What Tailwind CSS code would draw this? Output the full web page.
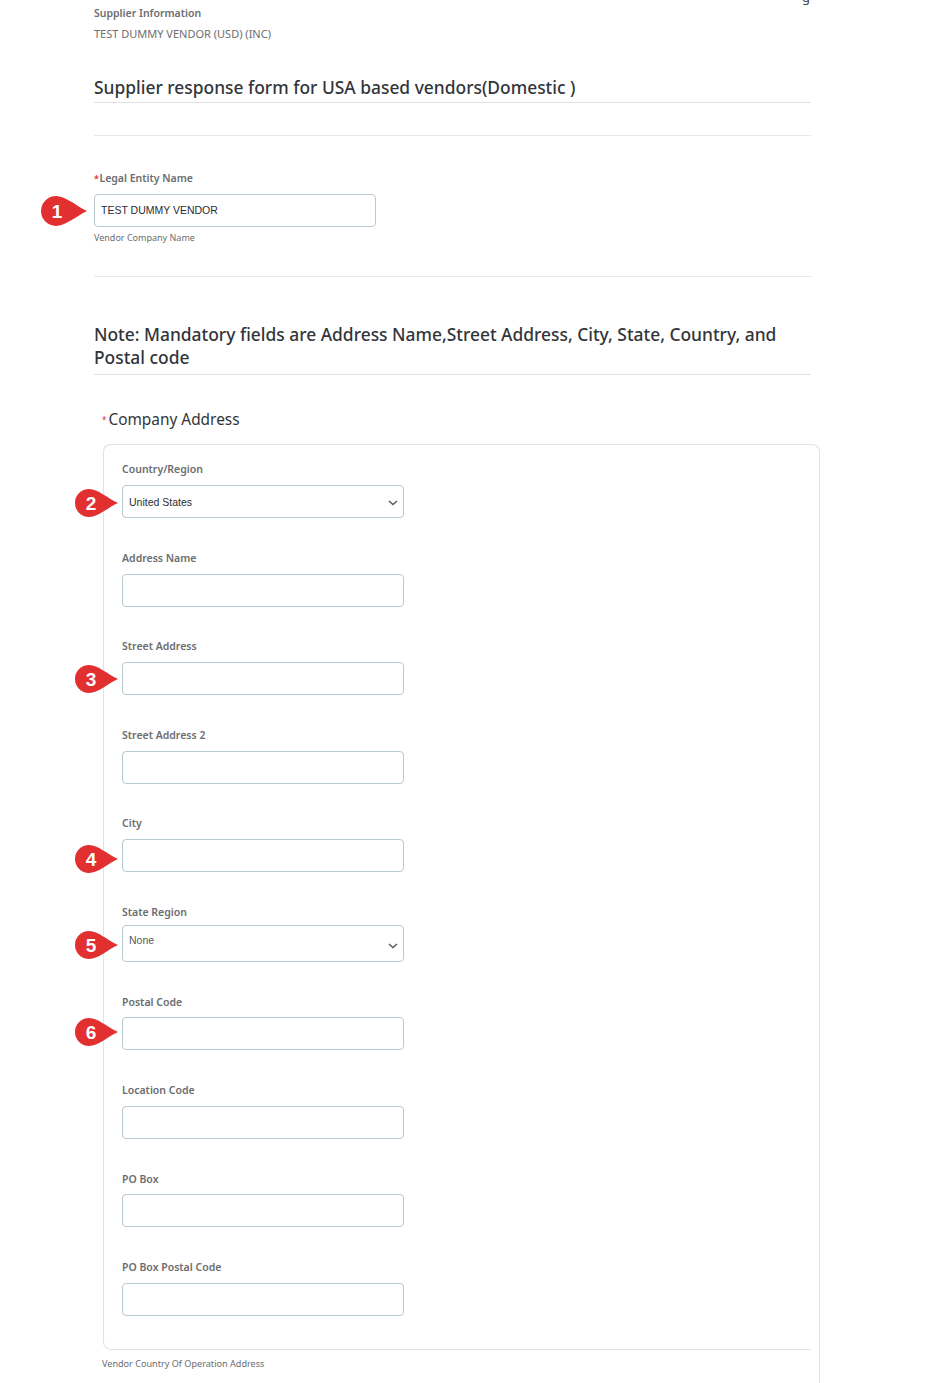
<!DOCTYPE html>
<html lang="en">
<head>
  <meta charset="UTF-8" />
  <title>Supplier response form</title>
  <script src="https://cdn.jsdelivr.net/npm/@tailwindcss/browser@4"></script>
</head>
<body class="bg-white h-[1383px] overflow-hidden relative font-['Noto_Sans',sans-serif]">

  <!-- cut off text at the very top -->
  <span class="absolute left-[802px] top-[-11px] text-[13px] leading-[16px] text-[#444]">g</span>

  <div class="ml-[94px] w-[717px]">
    <!-- supplier info -->
    <div class="h-[21px] pt-[5px] text-[10.5px] leading-[16px] font-semibold text-[#6b6d70]">Supplier Information</div>
    <div class="mt-[5px] text-[11px] leading-[16px] text-[#6b6d70]">TEST DUMMY VENDOR (USD) (INC)</div>

    <h2 class="mt-[31px] h-[30px] border-b border-[#dfe1e3] text-[17.4px] leading-[28px] font-medium text-[#32353a]">Supplier response form for USA based vendors(Domestic )</h2>
    <div class="mt-[32px] border-t border-[#e6e8ea]"></div>

    <!-- legal entity -->
    <label class="mt-[35px] flex items-center h-[16px] text-[10.5px] font-semibold text-[#6b6d70]"><span class="mr-[0.5px] text-[9px] text-[#e02d2d]">*</span>Legal Entity Name</label>
    <div class="relative mt-[7px] w-[282px]">
      <svg class="absolute left-[-53px] top-[2px]" width="46" height="30" viewBox="0 0 46 30"><path d="M15 0C24 0 34 9 46 15C34 21 24 30 15 30A15 15 0 0 1 15 0Z" fill="#e22f2f"/><text x="16" y="22" text-anchor="middle" fill="#fff" font-size="19" font-weight="700" font-family="Liberation Sans">1</text></svg>
      <div class="flex items-center h-[33px] px-[6px] border border-[#b9c9d2] rounded-[4px] font-['Liberation_Sans'] text-[10.5px] text-[#2b2d30]">TEST DUMMY VENDOR</div>
    </div>
    <div class="mt-[3px] h-[16px] text-[9px] leading-[16px] text-[#6b6d70]">Vendor Company Name</div>
    <div class="mt-[30px] border-t border-[#e6e8ea]"></div>

    <h2 class="mt-[46px] pb-[5px] border-b border-[#dfe1e3] text-[17.4px] leading-[23px] font-medium text-[#32353a]">Note: Mandatory fields are Address Name,Street Address, City, State, Country, and Postal code</h2>

    <div class="mt-[34px] ml-[8px] flex items-center h-[21px] text-[15.4px] text-[#32353a]"><span class="mr-[2px] text-[#e02d2d] text-[8px]">*</span>Company Address</div>
  </div>

  <!-- address card, right edge runs on past the end of the screenshot -->
  <div class="ml-[103px] mt-[14px] w-[717px] h-[940px] border-t border-r border-[#e0e2e4] rounded-t-[8px]">
    <div class="-mt-px w-[708px] h-[906px] border-t border-l border-b border-[#e0e2e4] rounded-l-[8px] bg-white pt-[16px] pl-[18px]">

      <label class="block h-[16px] leading-[16px] text-[10.5px] font-semibold text-[#6b6d70]">Country/Region</label>
      <div class="relative mt-[8px] mb-[32px] w-[282px]">
        <svg class="absolute left-[-47px] top-[4px]" width="43" height="28" viewBox="0 0 43 28"><path d="M14 0C23 0 32 9 43 14C32 19 23 28 14 28A14 14 0 0 1 14 0Z" fill="#e22f2f"/><text x="16" y="21" text-anchor="middle" fill="#fff" font-size="19" font-weight="700" font-family="Liberation Sans">2</text></svg>
        <div class="flex items-center justify-between h-[33px] pl-[6px] pr-[5px] pt-[2px] border border-[#b9c9d2] rounded-[4px] font-['Liberation_Sans'] text-[10.5px] text-[#2b2d30]">United States
          <svg width="10" height="6" viewBox="0 0 10 6"><path d="M1 1l4 3.5L9 1" fill="none" stroke="#555b60" stroke-width="1.5"/></svg>
        </div>
      </div>

      <label class="block h-[16px] leading-[16px] text-[10.5px] font-semibold text-[#6b6d70]">Address Name</label>
      <div class="mt-[8px] mb-[30.5px] w-[282px] h-[33px] border border-[#b9c9d2] rounded-[4px]"></div>

      <label class="block h-[16px] leading-[16px] text-[10.5px] font-semibold text-[#6b6d70]">Street Address</label>
      <div class="relative mt-[8px] mb-[32px] w-[282px] h-[33px] border border-[#b9c9d2] rounded-[4px]">
        <svg class="absolute left-[-48px] top-[2px]" width="43" height="28" viewBox="0 0 43 28"><path d="M14 0C23 0 32 9 43 14C32 19 23 28 14 28A14 14 0 0 1 14 0Z" fill="#e22f2f"/><text x="16" y="21" text-anchor="middle" fill="#fff" font-size="19" font-weight="700" font-family="Liberation Sans">3</text></svg>
      </div>

      <label class="block h-[16px] leading-[16px] text-[10.5px] font-semibold text-[#6b6d70]">Street Address 2</label>
      <div class="mt-[8px] mb-[31.5px] w-[282px] h-[33px] border border-[#b9c9d2] rounded-[4px]"></div>

      <label class="block h-[16px] leading-[16px] text-[10.5px] font-semibold text-[#6b6d70]">City</label>
      <div class="relative mt-[8px] mb-[32px] w-[282px] h-[33px] border border-[#b9c9d2] rounded-[4px]">
        <svg class="absolute left-[-48px] top-[5px]" width="43" height="28" viewBox="0 0 43 28"><path d="M14 0C23 0 32 9 43 14C32 19 23 28 14 28A14 14 0 0 1 14 0Z" fill="#e22f2f"/><text x="16" y="21" text-anchor="middle" fill="#fff" font-size="19" font-weight="700" font-family="Liberation Sans">4</text></svg>
      </div>

      <label class="block h-[16px] leading-[16px] text-[10.5px] font-semibold text-[#6b6d70]">State Region</label>
      <div class="relative mt-[5px] mb-[32px] w-[282px]">
        <svg class="absolute left-[-47px] top-[6px]" width="43" height="28" viewBox="0 0 43 28"><path d="M14 0C23 0 32 9 43 14C32 19 23 28 14 28A14 14 0 0 1 14 0Z" fill="#e22f2f"/><text x="16" y="21" text-anchor="middle" fill="#fff" font-size="19" font-weight="700" font-family="Liberation Sans">5</text></svg>
        <div class="flex justify-between h-[37px] pl-[6px] pr-[5px] pt-[8px] border border-[#b9c9d2] rounded-[4px] font-['Liberation_Sans'] text-[10.5px] leading-[13px] text-[#55585c]">None
          <svg class="mt-[9px]" width="10" height="6" viewBox="0 0 10 6"><path d="M1 1l4 3.5L9 1" fill="none" stroke="#555b60" stroke-width="1.5"/></svg>
        </div>
      </div>

      <label class="block h-[16px] leading-[16px] text-[10.5px] font-semibold text-[#6b6d70]">Postal Code</label>
      <div class="relative mt-[7px] mb-[32px] w-[282px] h-[33px] border border-[#b9c9d2] rounded-[4px]">
        <svg class="absolute left-[-48px] top-[0px]" width="43" height="28" viewBox="0 0 43 28"><path d="M14 0C23 0 32 9 43 14C32 19 23 28 14 28A14 14 0 0 1 14 0Z" fill="#e22f2f"/><text x="16" y="21" text-anchor="middle" fill="#fff" font-size="19" font-weight="700" font-family="Liberation Sans">6</text></svg>
      </div>

      <label class="block h-[16px] leading-[16px] text-[10.5px] font-semibold text-[#6b6d70]">Location Code</label>
      <div class="mt-[8px] mb-[32px] w-[282px] h-[33px] border border-[#b9c9d2] rounded-[4px]"></div>

      <label class="block h-[16px] leading-[16px] text-[10.5px] font-semibold text-[#6b6d70]">PO Box</label>
      <div class="mt-[7px] mb-[32px] w-[282px] h-[33px] border border-[#b9c9d2] rounded-[4px]"></div>

      <label class="block h-[16px] leading-[16px] text-[10.5px] font-semibold text-[#6b6d70]">PO Box Postal Code</label>
      <div class="mt-[8px] w-[282px] h-[33px] border border-[#b9c9d2] rounded-[4px]"></div>
    </div>
    <div class="-ml-px mt-[6px] h-[16px] text-[9.1px] leading-[16px] text-[#6b6d70]">Vendor Country Of Operation Address</div>
  </div>
</body>
</html>
